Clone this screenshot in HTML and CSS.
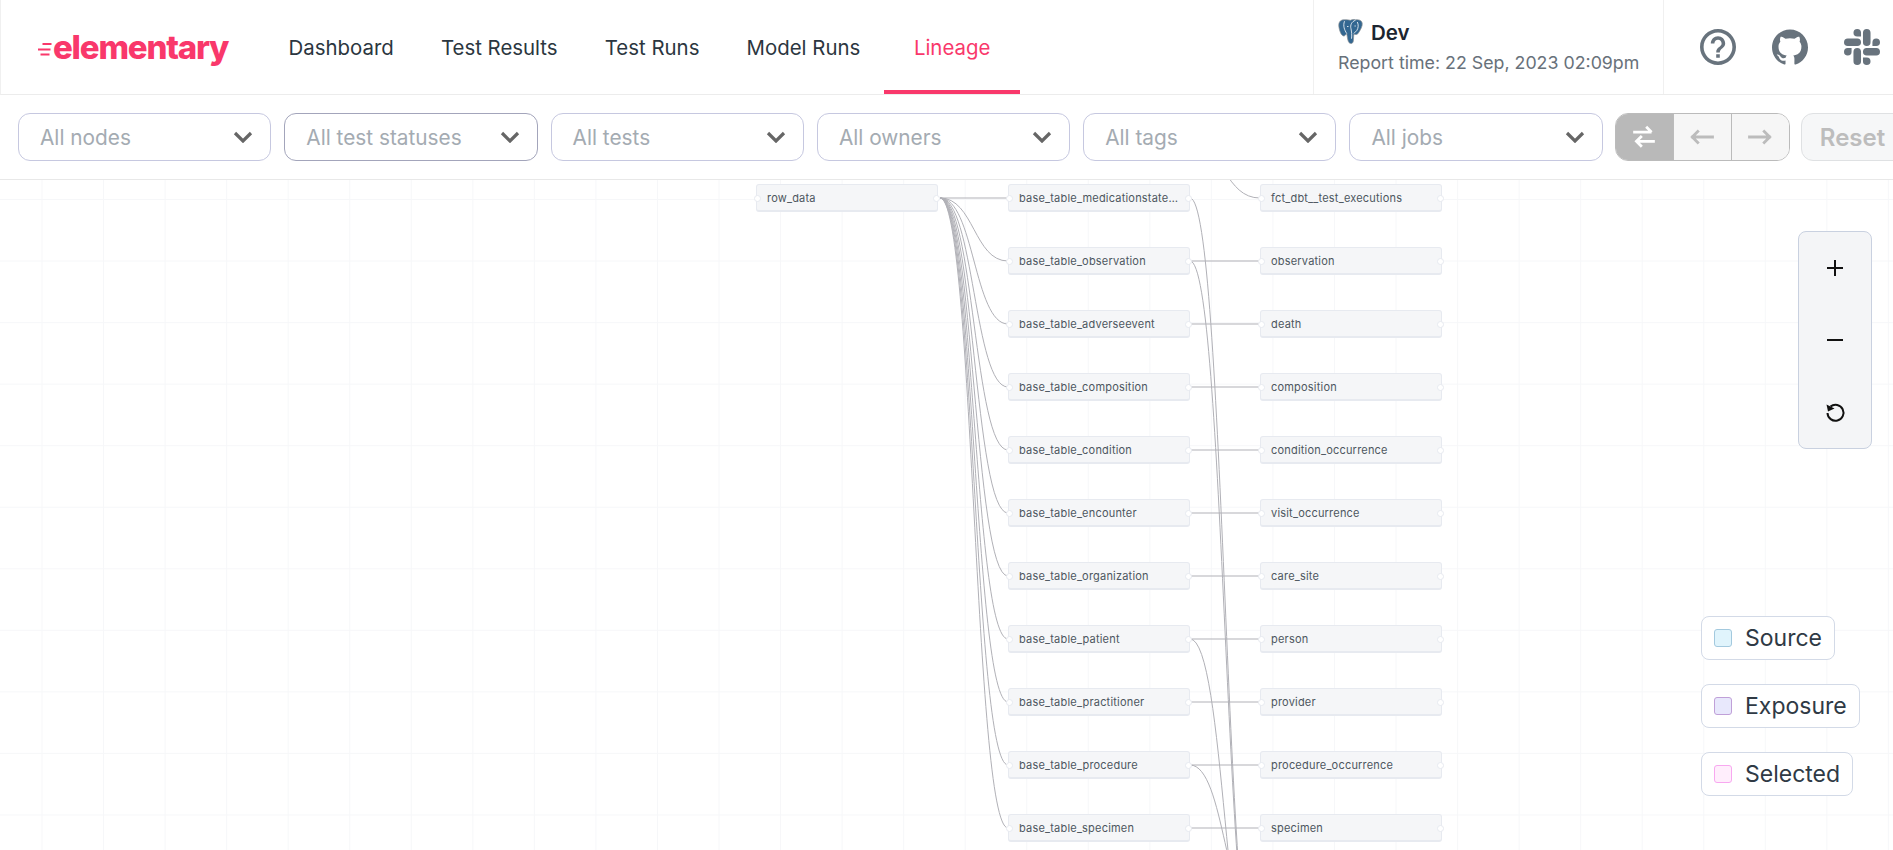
FILE: index.html
```html
<!DOCTYPE html>
<html lang="en">
<head>
    <meta charset="UTF-8">
    <title>Elementary - Lineage</title>
    <link rel="stylesheet" href="styles.css">
</head>
<body>

    <header class="topbar">
        <a class="logo">
            <svg class="logo-dashes" viewBox="0 0 15 14">
                <path d="M5.500 2h9M1 7.500h12.500M3.500 12.500h9"/>
            </svg>
            <span class="logo-text">elementary</span>
        </a>
        <nav class="nav">
            <a class="nav-item">Dashboard</a>
            <a class="nav-item">Test Results</a>
            <a class="nav-item">Test Runs</a>
            <a class="nav-item">Model Runs</a>
            <a class="nav-item active">Lineage</a>
        </nav>
        <div class="report-info">
            <div class="env">
                <svg class="pg-icon" viewBox="0 0 24 26">
                    <path class="pg-body" d="M5.500.8C1.800.8 0 3.500.3 7c.4 4 2.200 9.500 4.700 10 1.500.2 2.500-1.800 3.200-2.500.5 2.500.9 6.500 1.800 8.300 1.100 2.400 4.300 2.400 4.800-.6.4-2.600.2-5.700.7-7.200 1.700 1 3.500.6 4.600-1.300C22.200 10.500 24.200 7 23.700 4 23.200 1.200 20 .3 17 .8c-1.800-.6-3.500-.4-5 .5C10 .7 8 .5 5.500.8z"/>
                    <path class="pg-line" d="M6 2.200C4.300 7 6 11 8.200 14.500M17 1.200c-4 1.500-5.500 5-4.500 8.500.6 3 1 6.500.5 10M18.800 3c1.500 3 1 6-.5 8.500-1 1.200-2 1.800-3 3M8.500 7.500h1.500M16 7h1.300"/>
                </svg>
                <span class="env-name">Dev</span>
            </div>
            <div class="report-time">Report time: 22 Sep, 2023 02:09pm</div>
        </div>
        <div class="links">
            <svg class="link-icon" viewBox="2 2 20 20"><path d="M11 18h2v-2h-2v2zm1-16C6.480 2 2 6.480 2 12s4.480 10 10 10 10-4.480 10-10S17.520 2 12 2zm0 18c-4.410 0-8-3.590-8-8s3.590-8 8-8 8 3.590 8 8-3.590 8-8 8zm0-14c-2.210 0-4 1.790-4 4h2c0-1.100.9-2 2-2s2 .9 2 2c0 2-3 1.750-3 5h2c0-2.250 3-2.500 3-5 0-2.210-1.790-4-4-4z"/></svg>
            <svg class="link-icon" viewBox="0 0 24 24"><path d="M12 .297c-6.630 0-12 5.373-12 12 0 5.303 3.438 9.800 8.205 11.385.6.113.82-.258.82-.577 0-.285-.01-1.040-.015-2.040-3.338.724-4.042-1.610-4.042-1.610C4.422 18.070 3.633 17.700 3.633 17.700c-1.087-.744.084-.729.084-.729 1.205.084 1.838 1.236 1.838 1.236 1.070 1.835 2.809 1.305 3.495.998.108-.776.417-1.305.76-1.605-2.665-.3-5.466-1.332-5.466-5.930 0-1.310.465-2.380 1.235-3.220-.135-.303-.54-1.523.105-3.176 0 0 1.005-.322 3.300 1.230.96-.267 1.980-.399 3-.405 1.020.006 2.040.138 3 .405 2.280-1.552 3.285-1.230 3.285-1.230.645 1.653.24 2.873.12 3.176.765.84 1.230 1.910 1.230 3.220 0 4.610-2.805 5.625-5.475 5.920.42.36.81 1.096.81 2.220 0 1.606-.015 2.896-.015 3.286 0 .315.21.69.825.57C20.565 22.092 24 17.592 24 12.297c0-6.627-5.373-12-12-12"/></svg>
            <svg class="link-icon" viewBox="0 0 24 24"><path d="M5.042 15.165a2.528 2.528 0 0 1-2.520 2.523A2.528 2.528 0 0 1 0 15.165a2.527 2.527 0 0 1 2.522-2.520h2.520v2.520zM6.313 15.165a2.527 2.527 0 0 1 2.521-2.520 2.527 2.527 0 0 1 2.521 2.520v6.313A2.528 2.528 0 0 1 8.834 24a2.528 2.528 0 0 1-2.521-2.522v-6.313zM8.834 5.042a2.528 2.528 0 0 1-2.521-2.520A2.528 2.528 0 0 1 8.834 0a2.528 2.528 0 0 1 2.521 2.522v2.520H8.834zM8.834 6.313a2.528 2.528 0 0 1 2.521 2.521 2.528 2.528 0 0 1-2.521 2.521H2.522A2.528 2.528 0 0 1 0 8.834a2.528 2.528 0 0 1 2.522-2.521h6.312zM18.956 8.834a2.528 2.528 0 0 1 2.522-2.521A2.528 2.528 0 0 1 24 8.834a2.528 2.528 0 0 1-2.522 2.521h-2.522V8.834zM17.688 8.834a2.528 2.528 0 0 1-2.523 2.521 2.527 2.527 0 0 1-2.520-2.521V2.522A2.527 2.527 0 0 1 15.165 0a2.528 2.528 0 0 1 2.523 2.522v6.312zM15.165 18.956a2.528 2.528 0 0 1 2.523 2.522A2.528 2.528 0 0 1 15.165 24a2.527 2.527 0 0 1-2.520-2.522v-2.522h2.520zM15.165 17.688a2.527 2.527 0 0 1-2.520-2.523 2.526 2.526 0 0 1 2.520-2.520h6.313A2.527 2.527 0 0 1 24 15.165a2.528 2.528 0 0 1-2.522 2.523h-6.313z"/></svg>
        </div>
    </header>

    <div class="toolbar">
        <div class="filter"><span>All nodes</span><svg class="chevron" viewBox="0 0 20 12"><path d="M2 2l8 8 8-8"/></svg></div>
        <div class="filter dark"><span>All test statuses</span><svg class="chevron" viewBox="0 0 20 12"><path d="M2 2l8 8 8-8"/></svg></div>
        <div class="filter"><span>All tests</span><svg class="chevron" viewBox="0 0 20 12"><path d="M2 2l8 8 8-8"/></svg></div>
        <div class="filter"><span>All owners</span><svg class="chevron" viewBox="0 0 20 12"><path d="M2 2l8 8 8-8"/></svg></div>
        <div class="filter"><span>All tags</span><svg class="chevron" viewBox="0 0 20 12"><path d="M2 2l8 8 8-8"/></svg></div>
        <div class="filter"><span>All jobs</span><svg class="chevron" viewBox="0 0 20 12"><path d="M2 2l8 8 8-8"/></svg></div>
        <div class="direction">
            <button class="dir-btn on">
                <svg viewBox="0 0 24 24"><path d="M2 7.500h17M14 2.500l5 5M22 16H5M10 11l-5 5 5 5"/></svg>
            </button>
            <button class="dir-btn">
                <svg viewBox="0 0 24 24"><path d="M23 12H2M9 6l-6 6 6 6"/></svg>
            </button>
            <button class="dir-btn">
                <svg viewBox="0 0 24 24"><path d="M1 12h21M15 6l6 6-6 6"/></svg>
            </button>
        </div>
        <button class="reset">Reset</button>
    </div>

    <main class="canvas">
        <svg class="edges" viewBox="0 180 1893 670">
            <path d="M940 198H1008"/>
            <path d="M940 198C974 198 974 261 1008 261"/>
            <path d="M940 198C974 198 974 324 1008 324"/>
            <path d="M940 198C974 198 974 387 1008 387"/>
            <path d="M940 198C974 198 974 450 1008 450"/>
            <path d="M940 198C974 198 974 513 1008 513"/>
            <path d="M940 198C974 198 974 576 1008 576"/>
            <path d="M940 198C974 198 974 639 1008 639"/>
            <path d="M940 198C974 198 974 702 1008 702"/>
            <path d="M940 198C974 198 974 765 1008 765"/>
            <path d="M940 198C974 198 974 828 1008 828"/>

            <path d="M1190 261H1260"/>
            <path d="M1190 324H1260"/>
            <path d="M1190 387H1260"/>
            <path d="M1190 450H1260"/>
            <path d="M1190 513H1260"/>
            <path d="M1190 576H1260"/>
            <path d="M1190 639H1260"/>
            <path d="M1190 702H1260"/>
            <path d="M1190 765H1260"/>
            <path d="M1190 828H1260"/>

            <path d="M1190 147C1225 147 1225 198 1260 198"/>
            <path d="M1190 198C1225 198 1225 1000 1260 1000"/>
            <path d="M1190 261C1225 261 1225 1000 1260 1000"/>
            <path d="M1190 639C1225 639 1225 1000 1260 1000"/>
            <path d="M1190 765C1225 765 1225 920 1260 920"/>
        </svg>

        <div class="graph">
            <div class="node">row_data</div>
            <div class="node">base_table_medicationstate…</div>
            <div class="node">fct_dbt__test_executions</div>
            <div class="node col2">base_table_observation</div>
            <div class="node">observation</div>
            <div class="node col2">base_table_adverseevent</div>
            <div class="node">death</div>
            <div class="node col2">base_table_composition</div>
            <div class="node">composition</div>
            <div class="node col2">base_table_condition</div>
            <div class="node">condition_occurrence</div>
            <div class="node col2">base_table_encounter</div>
            <div class="node">visit_occurrence</div>
            <div class="node col2">base_table_organization</div>
            <div class="node">care_site</div>
            <div class="node col2">base_table_patient</div>
            <div class="node">person</div>
            <div class="node col2">base_table_practitioner</div>
            <div class="node">provider</div>
            <div class="node col2">base_table_procedure</div>
            <div class="node">procedure_occurrence</div>
            <div class="node col2">base_table_specimen</div>
            <div class="node">specimen</div>
        </div>

        <div class="controls">
            <button class="ctrl-btn"><svg viewBox="0 0 24 24"><path d="M12 4v16M4 12h16"/></svg></button>
            <button class="ctrl-btn"><svg viewBox="0 0 24 24"><path d="M4 12h16"/></svg></button>
            <button class="ctrl-btn"><svg viewBox="0 0 24 24"><path d="M7.500 6.500A8 8 0 1 1 4.500 13"/><path class="solid" d="M3.500 4.500l1.500 7 6.500-3z"/></svg></button>
        </div>

        <div class="legend">
            <div class="legend-item"><span class="swatch source"></span>Source</div>
            <div class="legend-item"><span class="swatch exposure"></span>Exposure</div>
            <div class="legend-item"><span class="swatch selected"></span>Selected</div>
        </div>
    </main>

</body>
</html>
```

FILE: styles.css
```css
* {
    box-sizing: border-box;
}
html, body {
    height: 100%;
}
body {
    margin: 0;
    font-family: Inter, "Noto Sans", sans-serif;
    color: #2b3640;
    background-color: #fff;
    overflow: hidden;
    display: flex;
    flex-direction: column;
}
button {
    font-family: inherit;
}

.topbar {
    display: flex;
    align-items: stretch;
    flex: none;
    height: 95px;
    border-bottom: 1px solid #ececec;
    border-left: 1px solid #f0f0f0;
}
.logo {
    display: flex;
    align-items: center;
    margin-left: 36px;
    width: 228px;
}
.logo-dashes {
    width: 15px;
    height: 14px;
    margin-top: 4px;
    flex: none;
}
.logo-dashes path {
    fill: none;
    stroke: #f9386b;
    stroke-width: 2.2;
}
.logo-text {
    margin-left: 1px;
    color: #f9386b;
    font-size: 33px;
    font-weight: 800;
    letter-spacing: -1.200px;
}

.nav {
    display: flex;
}
.nav-item {
    display: flex;
    align-items: center;
    padding: 0 23.600px;
    font-size: 20.400px;
    color: #2b3640;
}
.nav-item.active {
    padding: 4px 30px 0;
    color: #f9386b;
    border-bottom: 4px solid #f9386b;
}

.report-info {
    margin-left: auto;
    width: 351px;
    padding: 20px 24px 0;
    border-left: 1px solid #f0f0f0;
    border-right: 1px solid #f0f0f0;
}
.env {
    display: flex;
    align-items: center;
    gap: 8px;
    height: 24px;
}
.pg-icon {
    width: 25px;
    height: 26px;
}
.pg-body {
    fill: #336791;
    stroke: #8a8f94;
    stroke-width: .7;
}
.pg-line {
    fill: none;
    stroke: #fff;
    stroke-width: .8;
}
.env-name {
    font-size: 20.500px;
    font-weight: 600;
    color: #1c2530;
}
.report-time {
    margin-top: 8px;
    font-size: 17.800px;
    color: #68717a;
    white-space: nowrap;
}
.links {
    display: flex;
    align-items: center;
    gap: 36px;
    padding: 0 13px 1px 36px;
}
.link-icon {
    width: 36px;
    height: 36px;
    fill: #68737d;
}

.toolbar {
    display: flex;
    flex: none;
    gap: 13px;
    height: 85px;
    padding: 18px 0 0 18px;
    border-bottom: 1px solid #e8e8e8;
    overflow: hidden;
}
.filter {
    display: flex;
    align-items: center;
    justify-content: space-between;
    flex: none;
    width: 253.300px;
    height: 48px;
    padding: 0 17px 0 21px;
    border: 1px solid #c6c8e0;
    border-radius: 12px;
    font-size: 20.800px;
    color: #a4abb2;
}
.filter.dark {
    border-color: #a3a5bb;
}
.chevron {
    width: 20px;
    height: 12px;
}
.chevron path {
    fill: none;
    stroke: #666;
    stroke-width: 3.200;
}

.direction {
    display: flex;
    flex: none;
    width: 175px;
    height: 48px;
    margin-left: -1px;
    border: 1px solid #bbb;
    border-radius: 13px;
    overflow: hidden;
}
.dir-btn {
    flex: 1;
    padding: 0;
    border: none;
    border-left: 1px solid #bbb;
    background-color: #f6f6f6;
    display: flex;
    align-items: center;
    justify-content: center;
}
.dir-btn svg {
    width: 26px;
    height: 26px;
    fill: none;
    stroke: #bcbcbc;
    stroke-width: 2.600;
}
.dir-btn.on {
    flex: none;
    width: 57px;
    border-left: none;
    background-color: #b9b9b9;
}
.dir-btn.on svg {
    stroke: #fff;
}
.reset {
    flex: none;
    width: 110px;
    height: 48px;
    margin-left: -2px;
    padding: 0 0 0 18px;
    text-align: left;
    border: 1px solid #dfe1e3;
    border-radius: 12px;
    background-color: #f6f7f8;
    color: #bdbdbd;
    font-size: 24px;
    font-weight: 600;
}

.canvas {
    position: relative;
    flex: 1;
    overflow: hidden;
    background-color: #fff;
    background-image:
        linear-gradient(to right, #f6f7f9 1px, transparent 1px),
        linear-gradient(to bottom, #f6f7f9 1px, transparent 1px);
    background-size: 61.550px 61.550px;
    background-position: 41.500px 19px;
}
.edges {
    position: absolute;
    left: 0;
    top: 0;
    width: 1893px;
    height: 670px;
}
.edges path {
    fill: none;
    stroke: #b1b1b7;
    stroke-width: 1;
}
.graph {
    position: relative;
    display: grid;
    grid-template-columns: repeat(3, 182px);
    grid-auto-rows: 28px;
    column-gap: 70px;
    row-gap: 35px;
    width: max-content;
    padding: 4px 0 0 756px;
}
.node {
    position: relative;
    display: flex;
    align-items: center;
    padding: 1px 10px 0;
    background-color: #f5f6f8;
    border: 1px solid #e7eaf0;
    border-bottom-width: 2px;
    border-radius: 3px;
    font-size: 11px;
    letter-spacing: .2px;
    color: #4d5660;
    white-space: nowrap;
}
.node.col2 {
    grid-column: 2;
}
.node::before,
.node::after {
    content: "";
    position: absolute;
    top: 10px;
    width: 5px;
    height: 5px;
    border-radius: 50%;
    background-color: #fff;
    border: 1px solid #e7eaf0;
}
.node::before {
    left: -3px;
}
.node::after {
    right: -3px;
}

.controls {
    position: absolute;
    right: 21px;
    top: 51px;
    display: flex;
    flex-direction: column;
    width: 74px;
    height: 218px;
    background-color: #f4f5f7;
    border: 1px solid #c9d1e0;
    border-radius: 8px;
}
.ctrl-btn {
    flex: 1;
    padding: 0;
    border: none;
    background: none;
    display: flex;
    align-items: center;
    justify-content: center;
}
.ctrl-btn svg {
    width: 24px;
    height: 24px;
    fill: none;
    stroke: #111;
    stroke-width: 2;
}
.ctrl-btn svg .solid {
    fill: #111;
    stroke: none;
}

.legend {
    position: absolute;
    left: 1701px;
    top: 436px;
    display: flex;
    flex-direction: column;
    align-items: flex-start;
    gap: 24px;
}
.legend-item {
    display: flex;
    align-items: center;
    gap: 13px;
    height: 44px;
    padding: 0 12px;
    background-color: #fff;
    border: 1px solid #d3dae7;
    border-radius: 8px;
    font-size: 23px;
    color: #2f3a45;
}
.swatch {
    width: 18px;
    height: 18px;
    border-radius: 3px;
    border: 1px solid;
}
.swatch.source {
    background-color: #e0f4fc;
    border-color: #a3c9de;
}
.swatch.exposure {
    background-color: #e8e8fc;
    border-color: #c0a0d8;
}
.swatch.selected {
    background-color: #ffeefc;
    border-color: #f8a8f0;
}
```
